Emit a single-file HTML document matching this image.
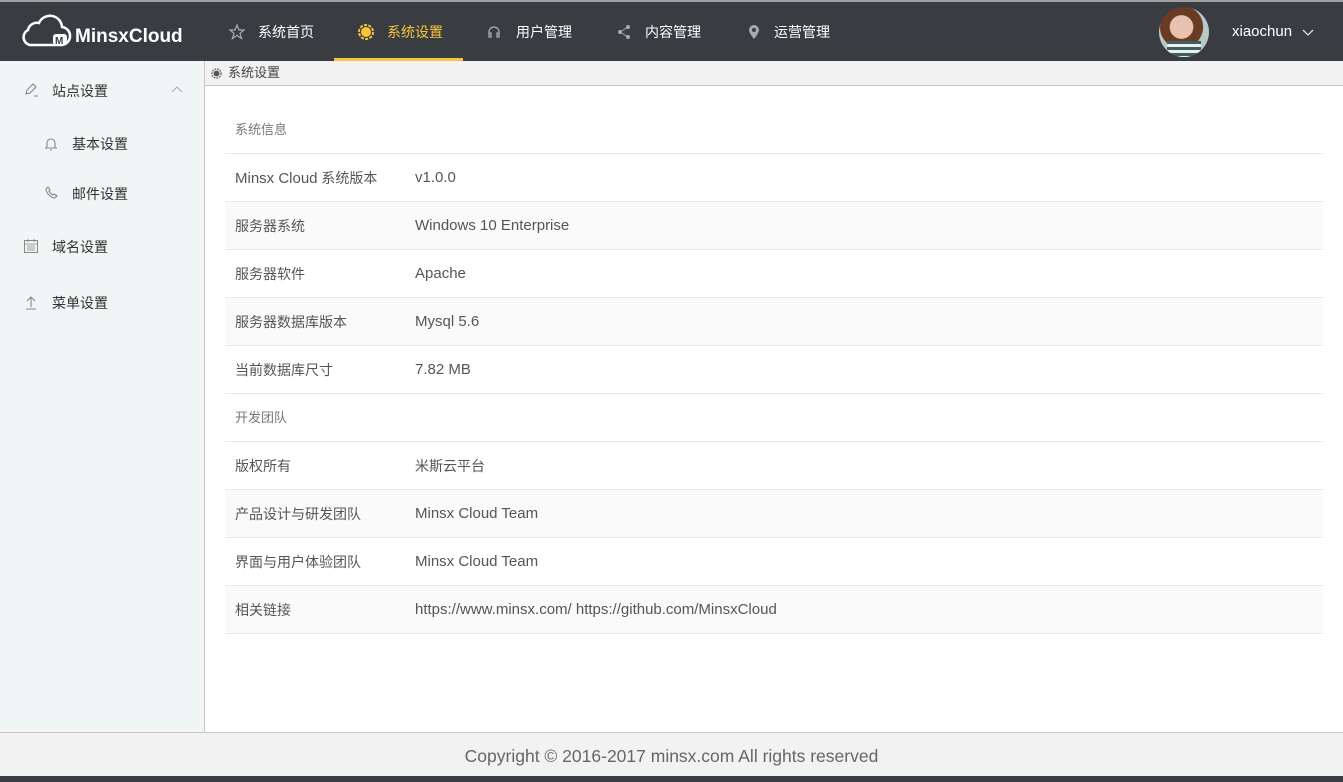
<!DOCTYPE html>
<html><head><meta charset="utf-8"><style>
*{margin:0;padding:0;box-sizing:border-box}
body{width:1343px;height:782px;overflow:hidden;font-family:"Liberation Sans","Noto Sans CJK SC",sans-serif;background:#fff;position:relative;color:#555}
.top{position:absolute;left:0;top:0;width:1343px;height:61px;background:#393d41;border-top:2px solid #a0a0a0}
.logo{position:absolute;left:20px;top:14px;color:#fff;font-size:19px;font-weight:bold}
.nav{position:absolute;top:0;height:59px;line-height:60px;color:#fff;font-size:14px}
.nav.act{color:#f7c53c;border-bottom:3px solid #f7c53c}
.nav svg{position:absolute;top:22px}
.side{position:absolute;left:0;top:61px;width:205px;height:671px;background:#f0f5f5;border-right:1px solid #c8c8c8}
.si{position:absolute;font-size:14px;color:#333}
.crumb{position:absolute;left:205px;top:61px;width:1138px;height:25px;background:#f2f2f2;border-bottom:1px solid #c8c8c8;font-size:13px;color:#444;line-height:24px;padding-left:23px}
.row{position:absolute;left:225px;width:1098px;height:48px;border-bottom:1px solid #e8e8e8;font-size:14px;line-height:48px;color:#555}
.row .k{position:absolute;left:10px}
.row .v{position:absolute;left:190px}
.l{font-size:15px}
.alt{background:#fafafa}
.foot{position:absolute;left:0;top:732px;width:1343px;height:44px;background:#f2f2f2;border-top:1px solid #c8c8c8;text-align:center;line-height:46px;font-size:17.5px;color:#666}
.bot{position:absolute;left:0;top:776px;width:1343px;height:6px;background:#393d41}
</style></head><body>
<div class="top">
<div class="logo"><svg width="52" height="34" viewBox="0 0 52 34" style="position:absolute;left:0;top:-2px"><path d="M10 31 H40 A9 9 0 0 0 42 13 A12 12 0 0 0 19 9 A9 9 0 0 0 8 16 A8 8 0 0 0 10 31Z" fill="none" stroke="#fff" stroke-width="2.5"/><rect x="33" y="20" width="14" height="11" rx="3" fill="#fff"/><text x="35" y="30" font-size="10" font-weight="bold" fill="#393d41" font-family="Liberation Sans">M</text></svg><span style="position:absolute;left:55px;top:10px;white-space:nowrap">MinsxCloud</span></div>
<div class="nav" style="left:229px;width:105px"><svg width="16" height="16" viewBox="0 0 16 16" style="left:0"><path d="M8 1l2 5h5l-4 3.3 1.6 5.2L8 11.4 3.4 14.5 5 9.3 1 6h5z" fill="none" stroke="#aaa" stroke-width="1.2"/></svg><span style="position:absolute;left:29px">系统首页</span></div>
<div class="nav act" style="left:334px;width:129px"><svg width="18" height="18" viewBox="0 0 18 18" style="left:23px;top:21px"><circle cx="9" cy="9" r="5" fill="#f7c53c"/><circle cx="9" cy="9" r="7" fill="none" stroke="#f7c53c" stroke-width="2" stroke-dasharray="3 1.4"/></svg><span style="position:absolute;left:53px">系统设置</span></div>
<div class="nav" style="left:486px"><svg width="16" height="16" viewBox="0 0 16 16" style="left:0"><path d="M3 10V8a5 5 0 0 1 10 0v2M3 9h2v4H3zM11 9h2v4h-2z" fill="none" stroke="#aaa" stroke-width="1.3"/></svg><span style="position:absolute;left:30px;white-space:nowrap">用户管理</span></div>
<div class="nav" style="left:616px"><svg width="16" height="16" viewBox="0 0 16 16" style="left:0"><circle cx="12" cy="3" r="2" fill="#aaa"/><circle cx="4" cy="8" r="2" fill="#aaa"/><circle cx="12" cy="13" r="2" fill="#aaa"/><path d="M12 3L4 8l8 5" stroke="#aaa" fill="none"/></svg><span style="position:absolute;left:29px;white-space:nowrap">内容管理</span></div>
<div class="nav" style="left:746px"><svg width="16" height="16" viewBox="0 0 16 16" style="left:0"><path d="M8 15S3 9 3 6a5 5 0 0 1 10 0c0 3-5 9-5 9z" fill="#aaa"/><circle cx="8" cy="6" r="2" fill="#393d41"/></svg><span style="position:absolute;left:28px;white-space:nowrap">运营管理</span></div>
<div style="position:absolute;left:1159px;top:5px;width:50px;height:50px;border-radius:50%;background:radial-gradient(circle at 45% 40%,#e8c2b0 0 28%,#6a3a22 30% 52%,#b8c8c8 54%);overflow:hidden"><div style="position:absolute;left:8px;top:34px;width:34px;height:16px;background:repeating-linear-gradient(#3a6060 0 3px,#eee 3px 6px)"></div></div>
<div style="position:absolute;left:1232px;top:21px;color:#fff;font-size:15px">xiaochun</div>
<svg width="12" height="8" viewBox="0 0 12 8" style="position:absolute;left:1302px;top:27px"><path d="M1 1l5 5 5-5" fill="none" stroke="#ddd" stroke-width="1.3"/></svg>
</div>
<div class="side">
<svg width="16" height="16" viewBox="0 0 16 16" style="position:absolute;left:23px;top:21px"><path d="M3 12l1-4 6-6 3 3-6 6zM11 14h4" fill="none" stroke="#888" stroke-width="1.1"/></svg>
<div class="si" style="left:52px;top:20px">站点设置</div>
<svg width="12" height="8" viewBox="0 0 12 8" style="position:absolute;left:171px;top:25px"><path d="M1 6l5-5 5 5" fill="none" stroke="#aaa" stroke-width="1"/></svg>
<svg width="16" height="16" viewBox="0 0 16 16" style="position:absolute;left:43px;top:75px"><path d="M4 12V7a4 4 0 0 1 8 0v5zM2 12h12M7 14h2" fill="none" stroke="#888" stroke-width="1.1"/></svg>
<div class="si" style="left:72px;top:73px">基本设置</div>
<svg width="16" height="16" viewBox="0 0 16 16" style="position:absolute;left:43px;top:124px"><path d="M3 4l2-2 2 3-1 1c1 2 2 3 4 4l1-1 3 2-2 2C8 13 3 8 3 4z" fill="none" stroke="#888" stroke-width="1.1"/></svg>
<div class="si" style="left:72px;top:123px">邮件设置</div>
<svg width="16" height="16" viewBox="0 0 16 16" style="position:absolute;left:23px;top:177px"><rect x="1.5" y="2.5" width="13" height="12" fill="none" stroke="#888"/><path d="M1.5 6h13M5 1v3M11 1v3M4 8h8M4 10h8M4 12h8" stroke="#888" stroke-width="0.8"/></svg>
<div class="si" style="left:52px;top:176px">域名设置</div>
<svg width="16" height="16" viewBox="0 0 16 16" style="position:absolute;left:23px;top:233px"><path d="M8 13V3M4 7l4-4 4 4M3 15h10" fill="none" stroke="#888" stroke-width="1.1"/></svg>
<div class="si" style="left:52px;top:232px">菜单设置</div>
</div>
<div class="crumb"><svg width="11" height="11" viewBox="0 0 12 12" style="position:absolute;left:6px;top:7px"><circle cx="6" cy="6" r="3.2" fill="#555"/><circle cx="6" cy="6" r="5" fill="none" stroke="#555" stroke-width="1.2" stroke-dasharray="2 1"/></svg>系统设置</div>
<div class="row" style="top:106px"><span class="k" style="font-size:13px;color:#777">系统信息</span></div>
<div class="row" style="top:154px"><span class="k"><span class="l">Minsx Cloud</span> 系统版本</span><span class="v l">v1.0.0</span></div>
<div class="row alt" style="top:202px"><span class="k">服务器系统</span><span class="v l">Windows 10 Enterprise</span></div>
<div class="row" style="top:250px"><span class="k">服务器软件</span><span class="v l">Apache</span></div>
<div class="row alt" style="top:298px"><span class="k">服务器数据库版本</span><span class="v l">Mysql 5.6</span></div>
<div class="row" style="top:346px"><span class="k">当前数据库尺寸</span><span class="v l">7.82 MB</span></div>
<div class="row" style="top:394px"><span class="k" style="font-size:13px;color:#777">开发团队</span></div>
<div class="row" style="top:442px"><span class="k">版权所有</span><span class="v">米斯云平台</span></div>
<div class="row alt" style="top:490px"><span class="k">产品设计与研发团队</span><span class="v l">Minsx Cloud Team</span></div>
<div class="row" style="top:538px"><span class="k">界面与用户体验团队</span><span class="v l">Minsx Cloud Team</span></div>
<div class="row alt" style="top:586px"><span class="k">相关链接</span><span class="v l">https://www.minsx.com/ https://github.com/MinsxCloud</span></div>
<div class="foot">Copyright © 2016-2017 minsx.com All rights reserved</div>
<div class="bot"></div>
</body></html>
